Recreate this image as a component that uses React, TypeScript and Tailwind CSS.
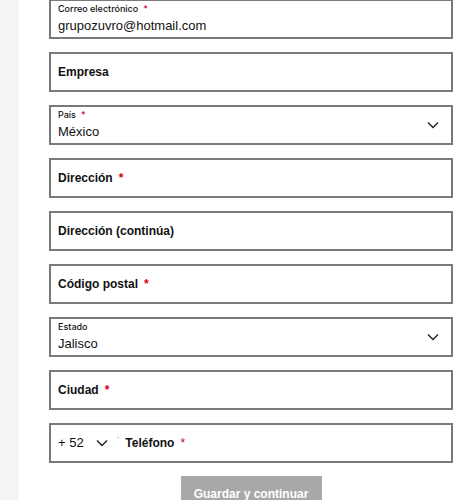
import React from "react";

const Star = () => <span className="text-[#d0021b] ml-[6px] text-[12px]">*</span>;

const Chevron = ({ className = "" }: { className?: string }) => (
  <svg width="12" height="8" viewBox="0 0 12 8" className={className}>
    <path d="M1 1.5 L6 6.5 L11 1.5" fill="none" stroke="#222" strokeWidth="1.4" />
  </svg>
);

const Box = ({ children }: { children: React.ReactNode }) => (
  <div className="relative h-[40px] w-[404px] shrink-0 border-2 border-[#7a7a7a] bg-white">{children}</div>
);

const Plain = ({ label, req }: { label: string; req?: boolean }) => (
  <Box>
    <div className="flex h-full items-center pl-[7px] text-[12px] font-bold text-[#111]">
      {label}
      {req && <Star />}
    </div>
  </Box>
);

const Filled = ({ label, value, req, select }: { label: string; value: string; req?: boolean; select?: boolean }) => (
  <Box>
    <div className="flex h-full items-center justify-between pl-[7px] pr-[12px]">
      <div className="flex flex-col">
        <div className="text-[9px] leading-[12px] font-medium text-[#111] mt-[-1px]" style={{ fontFamily: "Inter, sans-serif" }}>
          {label}
          {req && <span className="text-[#d0021b] ml-[5px]">*</span>}
        </div>
        <div className="text-[13px] leading-[18px] text-[#111] mt-[2px]">{value}</div>
      </div>
      {select && <Chevron />}
    </div>
  </Box>
);

export default function App() {
  return (
    <div className="flex h-[500px] w-[471px] overflow-hidden bg-white" style={{ fontFamily: "'Liberation Sans', Arial, sans-serif" }}>
      <div className="w-[18px] shrink-0 bg-[#f5f5f7] border-r border-[#ececef]" />
      <div className="flex flex-col gap-[13px] pl-[31px] mt-[-1px]">
        <Filled label="Correo electrónico" value="grupozuvro@hotmail.com" req />
        <Plain label="Empresa" />
        <Filled label="País" value="México" req select />
        <Plain label="Dirección" req />
        <Plain label="Dirección (continúa)" />
        <Plain label="Código postal" req />
        <Filled label="Estado" value="Jalisco" select />
        <Plain label="Ciudad" req />
        <Box>
          <div className="flex h-full items-center pl-[7px] text-[12px]">
            <span className="text-[13px] text-[#111]">+ 52</span>
            <Chevron className="ml-[12px]" />
            <span className="ml-[9px] mt-[-10px] text-[8px] text-[#333]">·</span>
            <span className="ml-[6px] text-[12px] font-bold text-[#111]">Teléfono</span>
            <Star />
          </div>
        </Box>
        <div className="flex shrink-0 justify-center">
          <button className="h-[36px] w-[141px] bg-[#a8a8a8] text-[12px] font-bold text-white">Guardar y continuar</button>
        </div>
      </div>
    </div>
  );
}
